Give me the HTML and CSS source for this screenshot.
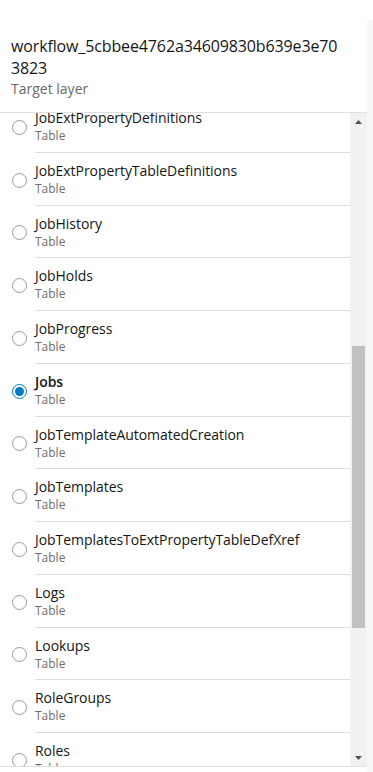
FILE: index.html
```html
<!DOCTYPE html>
<html lang="en">
<head>
<meta charset="utf-8">
<title>Target layer</title>
<link rel="stylesheet" href="styles.css">
</head>
<body>
<div class="page">
  <section class="panel">
    <header class="panel-header">
      <h1 class="panel-title">workflow_5cbbee4762a34609830b639e3e70<wbr>3823</h1>
      <p class="panel-subtitle">Target layer</p>
    </header>
    <div class="list-area">
      <div class="list-viewport">
        <ul class="list">
          <li class="item"><span class="radio"></span><div class="item-text"><div class="item-title">JobExtPropertyDefinitions</div><div class="item-desc">Table</div></div></li>
          <li class="item"><span class="radio"></span><div class="item-text"><div class="item-title">JobExtPropertyTableDefinitions</div><div class="item-desc">Table</div></div></li>
          <li class="item"><span class="radio"></span><div class="item-text"><div class="item-title">JobHistory</div><div class="item-desc">Table</div></div></li>
          <li class="item"><span class="radio"></span><div class="item-text"><div class="item-title">JobHolds</div><div class="item-desc">Table</div></div></li>
          <li class="item"><span class="radio"></span><div class="item-text"><div class="item-title">JobProgress</div><div class="item-desc">Table</div></div></li>
          <li class="item is-selected"><span class="radio radio-checked"></span><div class="item-text"><div class="item-title">Jobs</div><div class="item-desc">Table</div></div></li>
          <li class="item"><span class="radio"></span><div class="item-text"><div class="item-title">JobTemplateAutomatedCreation</div><div class="item-desc">Table</div></div></li>
          <li class="item"><span class="radio"></span><div class="item-text"><div class="item-title">JobTemplates</div><div class="item-desc">Table</div></div></li>
          <li class="item"><span class="radio"></span><div class="item-text"><div class="item-title">JobTemplatesToExtPropertyTableDefXref</div><div class="item-desc">Table</div></div></li>
          <li class="item"><span class="radio"></span><div class="item-text"><div class="item-title">Logs</div><div class="item-desc">Table</div></div></li>
          <li class="item"><span class="radio"></span><div class="item-text"><div class="item-title">Lookups</div><div class="item-desc">Table</div></div></li>
          <li class="item"><span class="radio"></span><div class="item-text"><div class="item-title">RoleGroups</div><div class="item-desc">Table</div></div></li>
          <li class="item"><span class="radio"></span><div class="item-text"><div class="item-title">Roles</div><div class="item-desc">Table</div></div></li>
        </ul>
      </div>
      <div class="scrollbar">
        <div class="sb-button"><svg width="7" height="4" viewBox="0 0 7 4"><polygon points="0,4 7,4 3.5,0" fill="#505050"/></svg></div>
        <div class="sb-track"><div class="sb-thumb"></div></div>
        <div class="sb-button"><svg width="7" height="4" viewBox="0 0 7 4"><polygon points="0,0 7,0 3.5,4" fill="#505050"/></svg></div>
      </div>
    </div>
  </section>
  <div class="edge"></div>
</div>
</body>
</html>
```
FILE: styles.css
```css
* { box-sizing: border-box; }
html, body { margin: 0; padding: 0; background: #fff; }
body {
  font-family: "Open Sans", "Noto Sans", sans-serif;
  color: #151515;
  width: 373px;
  height: 772px;
  overflow: hidden;
}
.page {
  display: flex;
  height: 772px;
}
.panel {
  width: 367px;
  flex: none;
  display: flex;
  flex-direction: column;
  background: #fff;
}
.edge {
  flex: 1;
  margin-top: 20px;
  background: #f8f8f8;
}
.panel-header {
  padding: 35px 11px 14px 11px;
  border-bottom: 1px solid #dfdfdf;
}
.panel-title {
  margin: 0;
  font-size: 16px;
  line-height: 22px;
  font-weight: 400;
  letter-spacing: -0.13px;
  color: #151515;
}
.panel-subtitle {
  margin: 0;
  font-size: 14px;
  line-height: 19px;
  color: #6a6a6a;
}
.list-area {
  height: 654px;
  display: flex;
  border-bottom: 1px solid #dfdfdf;
}
.list-viewport {
  flex: 1;
  overflow: hidden;
}
.list {
  list-style: none;
  margin: -13px 0 0 0;
  padding: 0;
}
.item {
  display: flex;
  align-items: center;
  padding-left: 12px;
}
.radio {
  flex: none;
  width: 15px;
  height: 15px;
  margin-top: 2px;
  border: 1px solid #9a9a9a;
  border-radius: 50%;
  background: #fff;
  display: flex;
  align-items: center;
  justify-content: center;
}
.radio-checked {
  border-color: #007ac2;
}
.radio-checked::after {
  content: "";
  width: 9px;
  height: 9px;
  border-radius: 50%;
  background: #007ac2;
}
.item-text {
  flex: 1;
  margin-left: 8px;
  padding: 8px 0 7.75px 0;
  border-bottom: 1px solid #dfdfdf;
}
.item-title {
  font-size: 14px;
  line-height: 20px;
  letter-spacing: -0.05px;
  color: #151515;
}
.is-selected .item-title {
  font-weight: 600;
}
.item-desc {
  font-size: 12px;
  line-height: 16px;
  color: #6e6e6e;
}
.scrollbar {
  width: 17px;
  flex: none;
  display: flex;
  flex-direction: column;
  background: #f1f1f1;
}
.sb-button {
  height: 17px;
  display: flex;
  align-items: center;
  justify-content: center;
}
.sb-track {
  flex: 1;
  padding: 0 2px;
}
.sb-thumb {
  margin-top: 216px;
  height: 282px;
  background: #c1c1c1;
}
```
